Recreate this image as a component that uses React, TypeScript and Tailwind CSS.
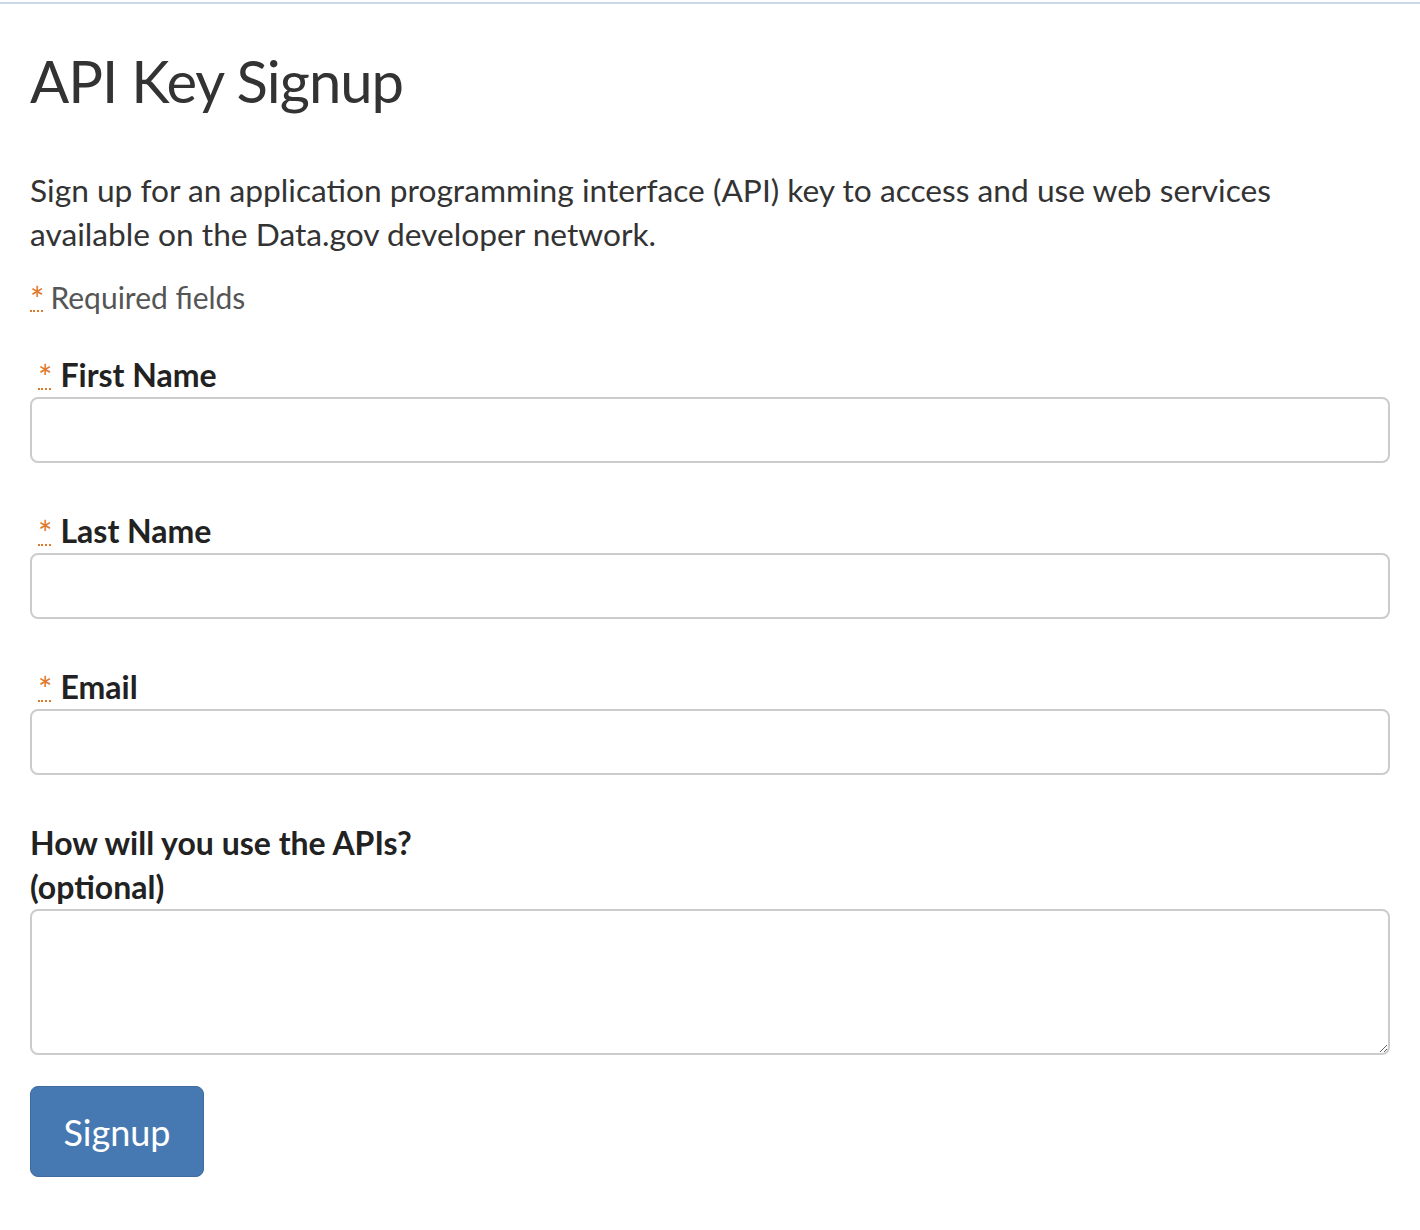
const fieldInput =
  "block w-full h-[66px] rounded-[8px] border-2 border-[#cccccc] bg-white px-3 text-[28px] outline-none";

function Req({ gap }: { gap: string }) {
  return (
    <abbr title="required" className={`relative inline-block no-underline text-[34px] leading-none font-normal text-[#e0782c] ${gap}`}>
      <span className="relative top-[3px]">*</span>
      <span className="absolute left-0 right-[1px] bottom-[1px] border-b-2 border-dotted border-[#e0782c]" />
    </abbr>
  );
}

function Field({ id, label }: { id: string; label: string }) {
  return (
    <div className="mb-[46px]">
      <label htmlFor={id} className="block pl-2 text-[32px] font-bold text-[#222] leading-[44px]">
        <Req gap="mr-[8px]" />
        {label}
      </label>
      <input id={id} type="text" className={fieldInput} />
    </div>
  );
}

export default function App() {
  return (
    <div className="min-h-screen bg-white font-['Lato','Liberation_Sans',sans-serif] text-[#333]">
      <div className="h-[2px] mt-[2px] bg-[#c9d9ea]" />
      <div className="px-[30px]">
        <h1 className="mt-[42px] text-[58px] leading-[70px] tracking-[-1px] text-[#333]">API Key Signup</h1>
        <p className="mt-[52px] text-[31.7px] leading-[44px] text-[#333]">
          Sign up for an application programming interface (API) key to access and use web services
          available on the Data.gov developer network.
        </p>
        <p className="mt-[19px] text-[30px] leading-[44px] text-[#555]">
          <Req gap="mr-[6px]" />
          Required fields
        </p>
        <form className="mt-[34px]" onSubmit={(e) => e.preventDefault()}>
          <Field id="first" label="First Name" />
          <Field id="last" label="Last Name" />
          <Field id="email" label="Email" />
          <div>
            <label htmlFor="use" className="block text-[32px] font-bold text-[#222] leading-[44px]">
              How will you use the APIs?
              <br />
              (optional)
            </label>
            <textarea
              id="use"
              className="block w-full h-[146px] rounded-[8px] border-2 border-[#cccccc] bg-white px-3 py-2 text-[28px] outline-none"
            />
          </div>
          <button
            type="submit"
            className="mt-[31px] w-[174px] h-[91px] rounded-[8px] bg-[#4679b2] border border-[#3f6c9f] text-white text-[36px]"
          >
            Signup
          </button>
        </form>
      </div>
    </div>
  );
}
